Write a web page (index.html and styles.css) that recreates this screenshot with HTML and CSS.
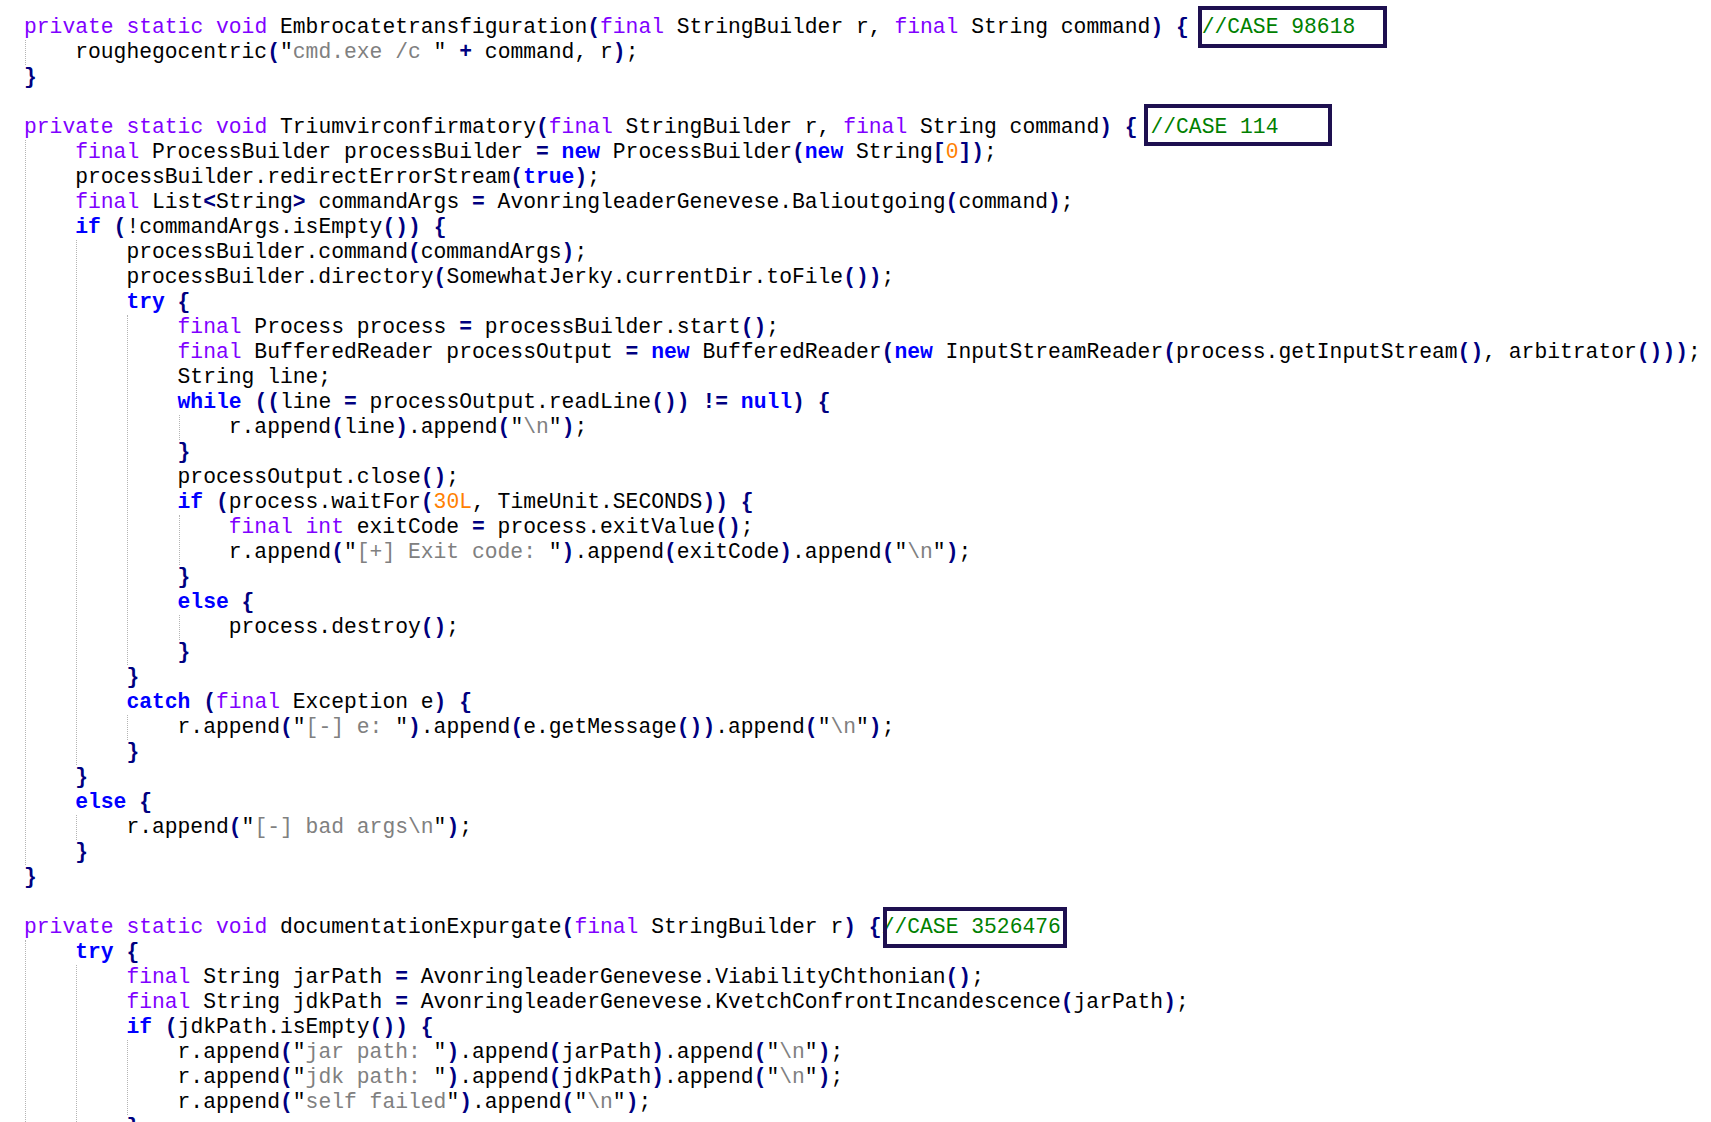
FILE: index.html
```html
<!DOCTYPE html>
<html>
<head>
<meta charset="utf-8">
<link rel="stylesheet" href="styles.css">
</head>
<body>
<div class="code">
<div class="ln"><span class="k">private</span> <span class="k">static</span> <span class="k">void</span> Embrocatetransfiguration<span class="o">(</span><span class="k">final</span> StringBuilder r, <span class="k">final</span> String command<span class="o">)</span> <span class="o">{</span> <span class="c box box-a">//CASE 98618</span></div>
<div class="blk">
<div class="ln">roughegocentric<span class="o">(</span>"<span class="s">cmd.exe /c </span>" <span class="o">+</span> command, r<span class="o">)</span>;</div>
</div>
<div class="ln"><span class="o">}</span></div>
<div class="ln"> </div>
<div class="ln"><span class="k">private</span> <span class="k">static</span> <span class="k">void</span> Triumvirconfirmatory<span class="o">(</span><span class="k">final</span> StringBuilder r, <span class="k">final</span> String command<span class="o">)</span> <span class="o">{</span> <span class="c box box-b">//CASE 114</span></div>
<div class="blk">
<div class="ln"><span class="k">final</span> ProcessBuilder processBuilder <span class="o">=</span> <span class="b">new</span> ProcessBuilder<span class="o">(</span><span class="b">new</span> String<span class="o">[</span><span class="n">0</span><span class="o">])</span>;</div>
<div class="ln">processBuilder.redirectErrorStream<span class="o">(</span><span class="b">true</span><span class="o">)</span>;</div>
<div class="ln"><span class="k">final</span> List<span class="o">&lt;</span>String<span class="o">&gt;</span> commandArgs <span class="o">=</span> AvonringleaderGenevese.Balioutgoing<span class="o">(</span>command<span class="o">)</span>;</div>
<div class="ln"><span class="b">if</span> <span class="o">(</span>!commandArgs.isEmpty<span class="o">())</span> <span class="o">{</span></div>
<div class="blk">
<div class="ln">processBuilder.command<span class="o">(</span>commandArgs<span class="o">)</span>;</div>
<div class="ln">processBuilder.directory<span class="o">(</span>SomewhatJerky.currentDir.toFile<span class="o">())</span>;</div>
<div class="ln"><span class="b">try</span> <span class="o">{</span></div>
<div class="blk">
<div class="ln"><span class="k">final</span> Process process <span class="o">=</span> processBuilder.start<span class="o">()</span>;</div>
<div class="ln"><span class="k">final</span> BufferedReader processOutput <span class="o">=</span> <span class="b">new</span> BufferedReader<span class="o">(</span><span class="b">new</span> InputStreamReader<span class="o">(</span>process.getInputStream<span class="o">()</span>, arbitrator<span class="o">()))</span>;</div>
<div class="ln">String line;</div>
<div class="ln"><span class="b">while</span> <span class="o">((</span>line <span class="o">=</span> processOutput.readLine<span class="o">())</span> <span class="o">!=</span> <span class="b">null</span><span class="o">)</span> <span class="o">{</span></div>
<div class="blk">
<div class="ln">r.append<span class="o">(</span>line<span class="o">)</span>.append<span class="o">(</span>"<span class="s">\n</span>"<span class="o">)</span>;</div>
</div>
<div class="ln"><span class="o">}</span></div>
<div class="ln">processOutput.close<span class="o">()</span>;</div>
<div class="ln"><span class="b">if</span> <span class="o">(</span>process.waitFor<span class="o">(</span><span class="n">30L</span>, TimeUnit.SECONDS<span class="o">))</span> <span class="o">{</span></div>
<div class="blk">
<div class="ln"><span class="k">final</span> <span class="k">int</span> exitCode <span class="o">=</span> process.exitValue<span class="o">()</span>;</div>
<div class="ln">r.append<span class="o">(</span>"<span class="s">[+] Exit code: </span>"<span class="o">)</span>.append<span class="o">(</span>exitCode<span class="o">)</span>.append<span class="o">(</span>"<span class="s">\n</span>"<span class="o">)</span>;</div>
</div>
<div class="ln"><span class="o">}</span></div>
<div class="ln"><span class="b">else</span> <span class="o">{</span></div>
<div class="blk">
<div class="ln">process.destroy<span class="o">()</span>;</div>
</div>
<div class="ln"><span class="o">}</span></div>
</div>
<div class="ln"><span class="o">}</span></div>
<div class="ln"><span class="b">catch</span> <span class="o">(</span><span class="k">final</span> Exception e<span class="o">)</span> <span class="o">{</span></div>
<div class="blk">
<div class="ln">r.append<span class="o">(</span>"<span class="s">[-] e: </span>"<span class="o">)</span>.append<span class="o">(</span>e.getMessage<span class="o">())</span>.append<span class="o">(</span>"<span class="s">\n</span>"<span class="o">)</span>;</div>
</div>
<div class="ln"><span class="o">}</span></div>
</div>
<div class="ln"><span class="o">}</span></div>
<div class="ln"><span class="b">else</span> <span class="o">{</span></div>
<div class="blk">
<div class="ln">r.append<span class="o">(</span>"<span class="s">[-] bad args\n</span>"<span class="o">)</span>;</div>
</div>
<div class="ln"><span class="o">}</span></div>
</div>
<div class="ln"><span class="o">}</span></div>
<div class="ln"> </div>
<div class="ln"><span class="k">private</span> <span class="k">static</span> <span class="k">void</span> documentationExpurgate<span class="o">(</span><span class="k">final</span> StringBuilder r<span class="o">)</span> <span class="o">{</span><span class="c box box-c">//CASE 3526476</span></div>
<div class="blk">
<div class="ln"><span class="b">try</span> <span class="o">{</span></div>
<div class="blk">
<div class="ln"><span class="k">final</span> String jarPath <span class="o">=</span> AvonringleaderGenevese.ViabilityChthonian<span class="o">()</span>;</div>
<div class="ln"><span class="k">final</span> String jdkPath <span class="o">=</span> AvonringleaderGenevese.KvetchConfrontIncandescence<span class="o">(</span>jarPath<span class="o">)</span>;</div>
<div class="ln"><span class="b">if</span> <span class="o">(</span>jdkPath.isEmpty<span class="o">())</span> <span class="o">{</span></div>
<div class="blk">
<div class="ln">r.append<span class="o">(</span>"<span class="s">jar path: </span>"<span class="o">)</span>.append<span class="o">(</span>jarPath<span class="o">)</span>.append<span class="o">(</span>"<span class="s">\n</span>"<span class="o">)</span>;</div>
<div class="ln">r.append<span class="o">(</span>"<span class="s">jdk path: </span>"<span class="o">)</span>.append<span class="o">(</span>jdkPath<span class="o">)</span>.append<span class="o">(</span>"<span class="s">\n</span>"<span class="o">)</span>;</div>
<div class="ln">r.append<span class="o">(</span>"<span class="s">self failed</span>"<span class="o">)</span>.append<span class="o">(</span>"<span class="s">\n</span>"<span class="o">)</span>;</div>
</div>
<div class="ln"><span class="o">}</span></div>
</div>
</div>
</div>
</body>
</html>
```

FILE: styles.css
```css
html, body {
  margin: 0;
  padding: 0;
  background: #ffffff;
  height: 100%;
  overflow: hidden;
}

.code {
  padding: 15px 0 0 24px;
  font-family: "Liberation Mono", "Courier New", monospace;
  font-size: 16pt;
  line-height: 25px;
  color: #000000;
}

.ln {
  white-space: pre;
  height: 25px;
}

.blk {
  margin-left: 1px;
  border-left: 1px dotted #b4b4b4;
  padding-left: calc(4ch - 2px);
}

.k { color: #8000ff; }
.b { color: #0000ff; font-weight: bold; }
.o { color: #000080; font-weight: bold; }
.s { color: #808080; }
.n { color: #ff8000; }
.c { color: #008000; }

.box {
  position: relative;
}

.box::after {
  content: "";
  position: absolute;
  box-sizing: border-box;
  height: 42px;
  border: 4px solid #1e1050;
}

.box-a::after {
  left: -4px;
  top: -9px;
  width: 189px;
}

.box-b::after {
  left: -6px;
  top: -11px;
  width: 188px;
}

.box-c::after {
  left: 1px;
  top: -8px;
  width: 184px;
  height: 41px;
}
```
